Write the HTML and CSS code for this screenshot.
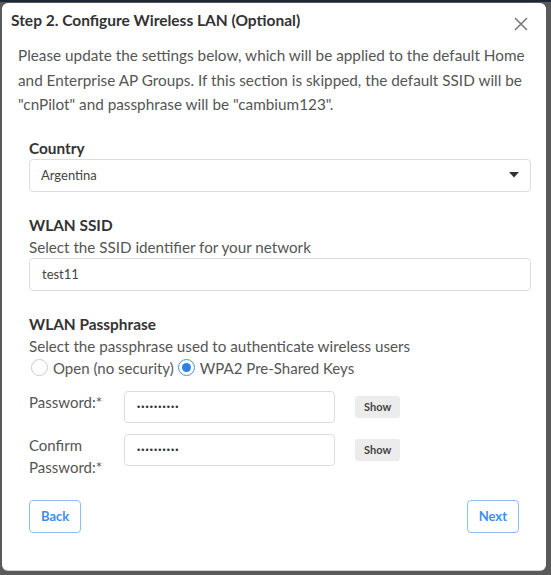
FILE: index.html
```html
<!DOCTYPE html>
<html>

<head>
  <meta charset="UTF-8">
  <meta name="viewport" content="width=device-width, initial-scale=1.0">
  <title>Step 2. Configure Wireless LAN</title>
  <link rel="stylesheet" href="styles.css">
</head>

<body>
  <div class="modal">
    <div class="modal-header">
      <h1 class="title">Step 2. Configure Wireless LAN (Optional)</h1>
      <button class="close" aria-label="Close">
        <svg width="14" height="14" viewBox="0 0 14 14">
          <path d="M1 1L13 13M13 1L1 13" stroke="#777" stroke-width="1.5" fill="none"/>
        </svg>
      </button>
    </div>

    <p class="intro">Please update the settings below, which will be applied to the default Home and Enterprise AP Groups. If this section is skipped, the default SSID will be "cnPilot" and passphrase will be "cambium123".</p>

    <div class="form">
      <div class="field">
        <label class="field-title">Country</label>
        <div class="select">
          <span>Argentina</span>
          <svg width="10" height="6" viewBox="0 0 10 6"><path d="M0 0h10L5 5.5z" fill="#333"/></svg>
        </div>
      </div>

      <div class="field">
        <label class="field-title">WLAN SSID</label>
        <div class="hint">Select the SSID identifier for your network</div>
        <input class="text-input" type="text" value="test11">
      </div>

      <div class="field">
        <label class="field-title">WLAN Passphrase</label>
        <div class="hint">Select the passphrase used to authenticate wireless users</div>
        <div class="radios">
          <label class="radio"><span class="dot"></span>Open (no security)</label>
          <label class="radio checked"><span class="dot"></span>WPA2 Pre-Shared Keys</label>
        </div>

        <div class="pw-row">
          <div class="pw-label">Password:*</div>
          <input class="pw-input" type="password" value="1234567890">
          <button class="show">Show</button>
        </div>
        <div class="pw-row">
          <div class="pw-label">Confirm Password:*</div>
          <input class="pw-input" type="password" value="1234567890">
          <button class="show">Show</button>
        </div>
      </div>

      <div class="actions">
        <button class="btn">Back</button>
        <button class="btn">Next</button>
      </div>
    </div>
  </div>
</body>

</html>
```
FILE: styles.css
```css
body {
  background: #5a5a5a;
  border-top: 2px solid #1d2636;
  font-family: Lato, "Open Sans", sans-serif;
  height: 573px;
  margin: 0;
  overflow: hidden;
  padding: 1px 5px 0 2px;
}

button {
  font-family: inherit;
}

.modal {
  background: #fff;
  border-radius: 6px;
  box-shadow: 0 1px 0 #cfcfcf;
  color: #333;
  height: 567px;
}

.modal-header {
  align-items: flex-start;
  display: flex;
  justify-content: space-between;
  padding: 7px 18px 0 9px;
}

.title {
  font-size: 15.5px;
  font-weight: 700;
  line-height: 20px;
  margin: 0;
}

.close {
  background: none;
  border: 0;
  margin-top: 7px;
  padding: 0;
}

.intro {
  color: #555;
  font-size: 15.3px;
  line-height: 24.5px;
  margin: 9px 6px 0 16px;
}

.form {
  padding: 0 15px 0 27px;
}

.field {
  margin-top: 21px;
}

.field + .field {
  margin-top: 23px;
}

.field-title {
  display: block;
  font-size: 15.4px;
  font-weight: 700;
  line-height: 20px;
}

.hint {
  color: #555;
  font-size: 15.2px;
  line-height: 20px;
  margin-top: 2px;
}

.select,
.text-input {
  border: 1px solid #ddd;
  border-radius: 4px;
  box-sizing: border-box;
  height: 33px;
  width: 502px;
}

.select {
  align-items: center;
  color: #444;
  display: flex;
  font-size: 13px;
  justify-content: space-between;
  margin-top: 1px;
  padding: 0 11px 0 11px;
}

.text-input {
  color: #444;
  display: block;
  font-family: inherit;
  font-size: 13px;
  margin-top: 1px;
  padding: 0 12px;
}

.radios {
  display: flex;
  font-size: 15px;
  gap: 2px;
  line-height: 20px;
  margin-top: 2px;
}

.radio {
  align-items: center;
  color: #555;
  display: flex;
}

.dot {
  border: 1px solid #ccc;
  border-radius: 50%;
  box-sizing: border-box;
  height: 17px;
  margin: 0 5px 0 2px;
  position: relative;
  width: 17px;
}

.checked .dot {
  border-color: #4a90e2;
}

.checked .dot::after {
  background: #2f7fe6;
  border-radius: 50%;
  content: "";
  height: 9px;
  left: 3px;
  position: absolute;
  top: 3px;
  width: 9px;
}

.pw-row {
  align-items: flex-start;
  display: flex;
  margin-top: 11px;
}

.radios + .pw-row {
  margin-top: 13px;
}

.pw-label {
  color: #555;
  font-size: 15px;
  line-height: 22px;
  width: 95px;
}

.pw-input {
  border: 1px solid #ddd;
  border-radius: 4px;
  box-sizing: border-box;
  color: #333;
  font-size: 9px;
  height: 32px;
  letter-spacing: 1.1px;
  padding: 0 12px;
  width: 211px;
}

.show {
  background: #ececec;
  border: 0;
  border-radius: 3px;
  color: #444;
  font-size: 11px;
  font-weight: 700;
  height: 22px;
  margin: 5px 0 0 20px;
  padding: 0 9px;
}

.actions {
  display: flex;
  justify-content: space-between;
  margin-top: 22px;
  padding-right: 12px;
}

.btn {
  background: #fff;
  border: 1px solid #8ebdf6;
  border-radius: 4px;
  color: #3d8ef0;
  font-size: 13px;
  font-weight: 700;
  height: 33px;
  padding: 0 11px;
}
```
